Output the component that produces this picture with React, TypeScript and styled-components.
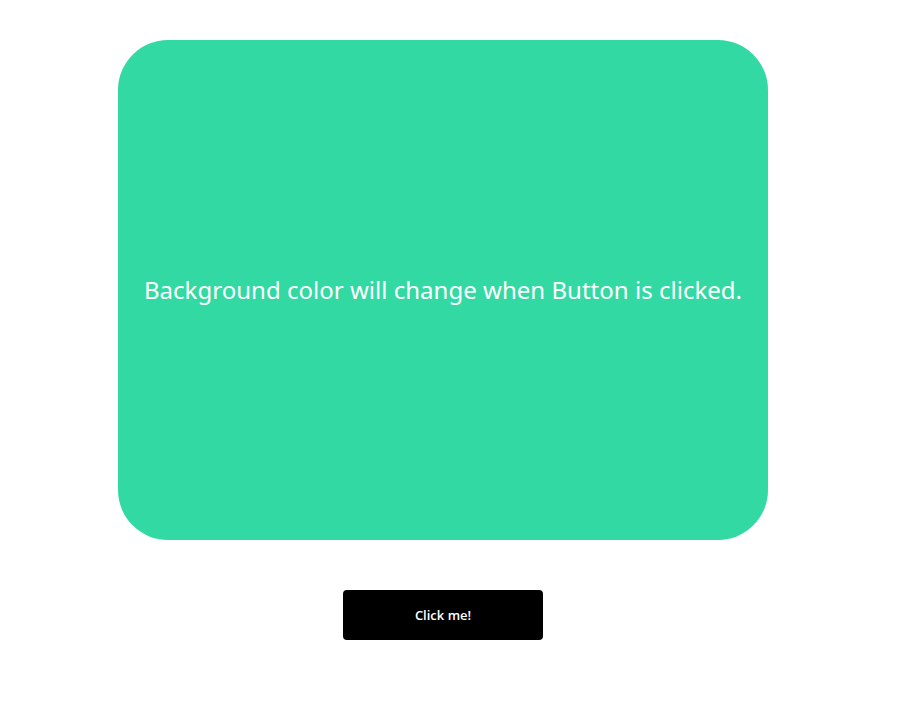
import { useState } from "react";
import { createGlobalStyle, styled } from "styled-components";

const GlobalStyle = createGlobalStyle`
    body {
        margin: 0;
        background: #ffffff;
        font-family: "Noto Sans", "DejaVu Sans", sans-serif;
    }
`;

const Page = styled.div`
    width: 886px;
    padding-top: 40px;
    display: flex;
    flex-direction: column;
    align-items: center;
    gap: 50px;
`;

const Card = styled.div<{ $bg: string }>`
    width: 650px;
    height: 500px;
    border-radius: 50px;
    background-color: ${(p) => p.$bg};
    display: flex;
    align-items: center;
    justify-content: center;
`;

const Message = styled.p`
    margin: 0 0 2px 0;
    color: #ffffff;
    font-size: 24px;
    font-family: "Noto Sans", sans-serif;
    letter-spacing: 0.02px;
`;

const Button = styled.button`
    width: 200px;
    height: 50px;
    border: none;
    border-radius: 4px;
    background: #000000;
    color: #ffffff;
    font-family: "Open Sans", sans-serif;
    font-size: 13px;
    font-weight: 600;
    cursor: pointer;
`;

const colors = ["#33d9a2", "#5b8def", "#f2a65a", "#e76f8a"];

function App() {
    const [index, setIndex] = useState(0);
    return (
        <>
            <GlobalStyle />
            <Page>
                <Card $bg={colors[index]}>
                    <Message>Background color will change when Button is clicked.</Message>
                </Card>
                <Button onClick={() => setIndex((i) => (i + 1) % colors.length)}>Click me!</Button>
            </Page>
        </>
    );
}

export default App;
